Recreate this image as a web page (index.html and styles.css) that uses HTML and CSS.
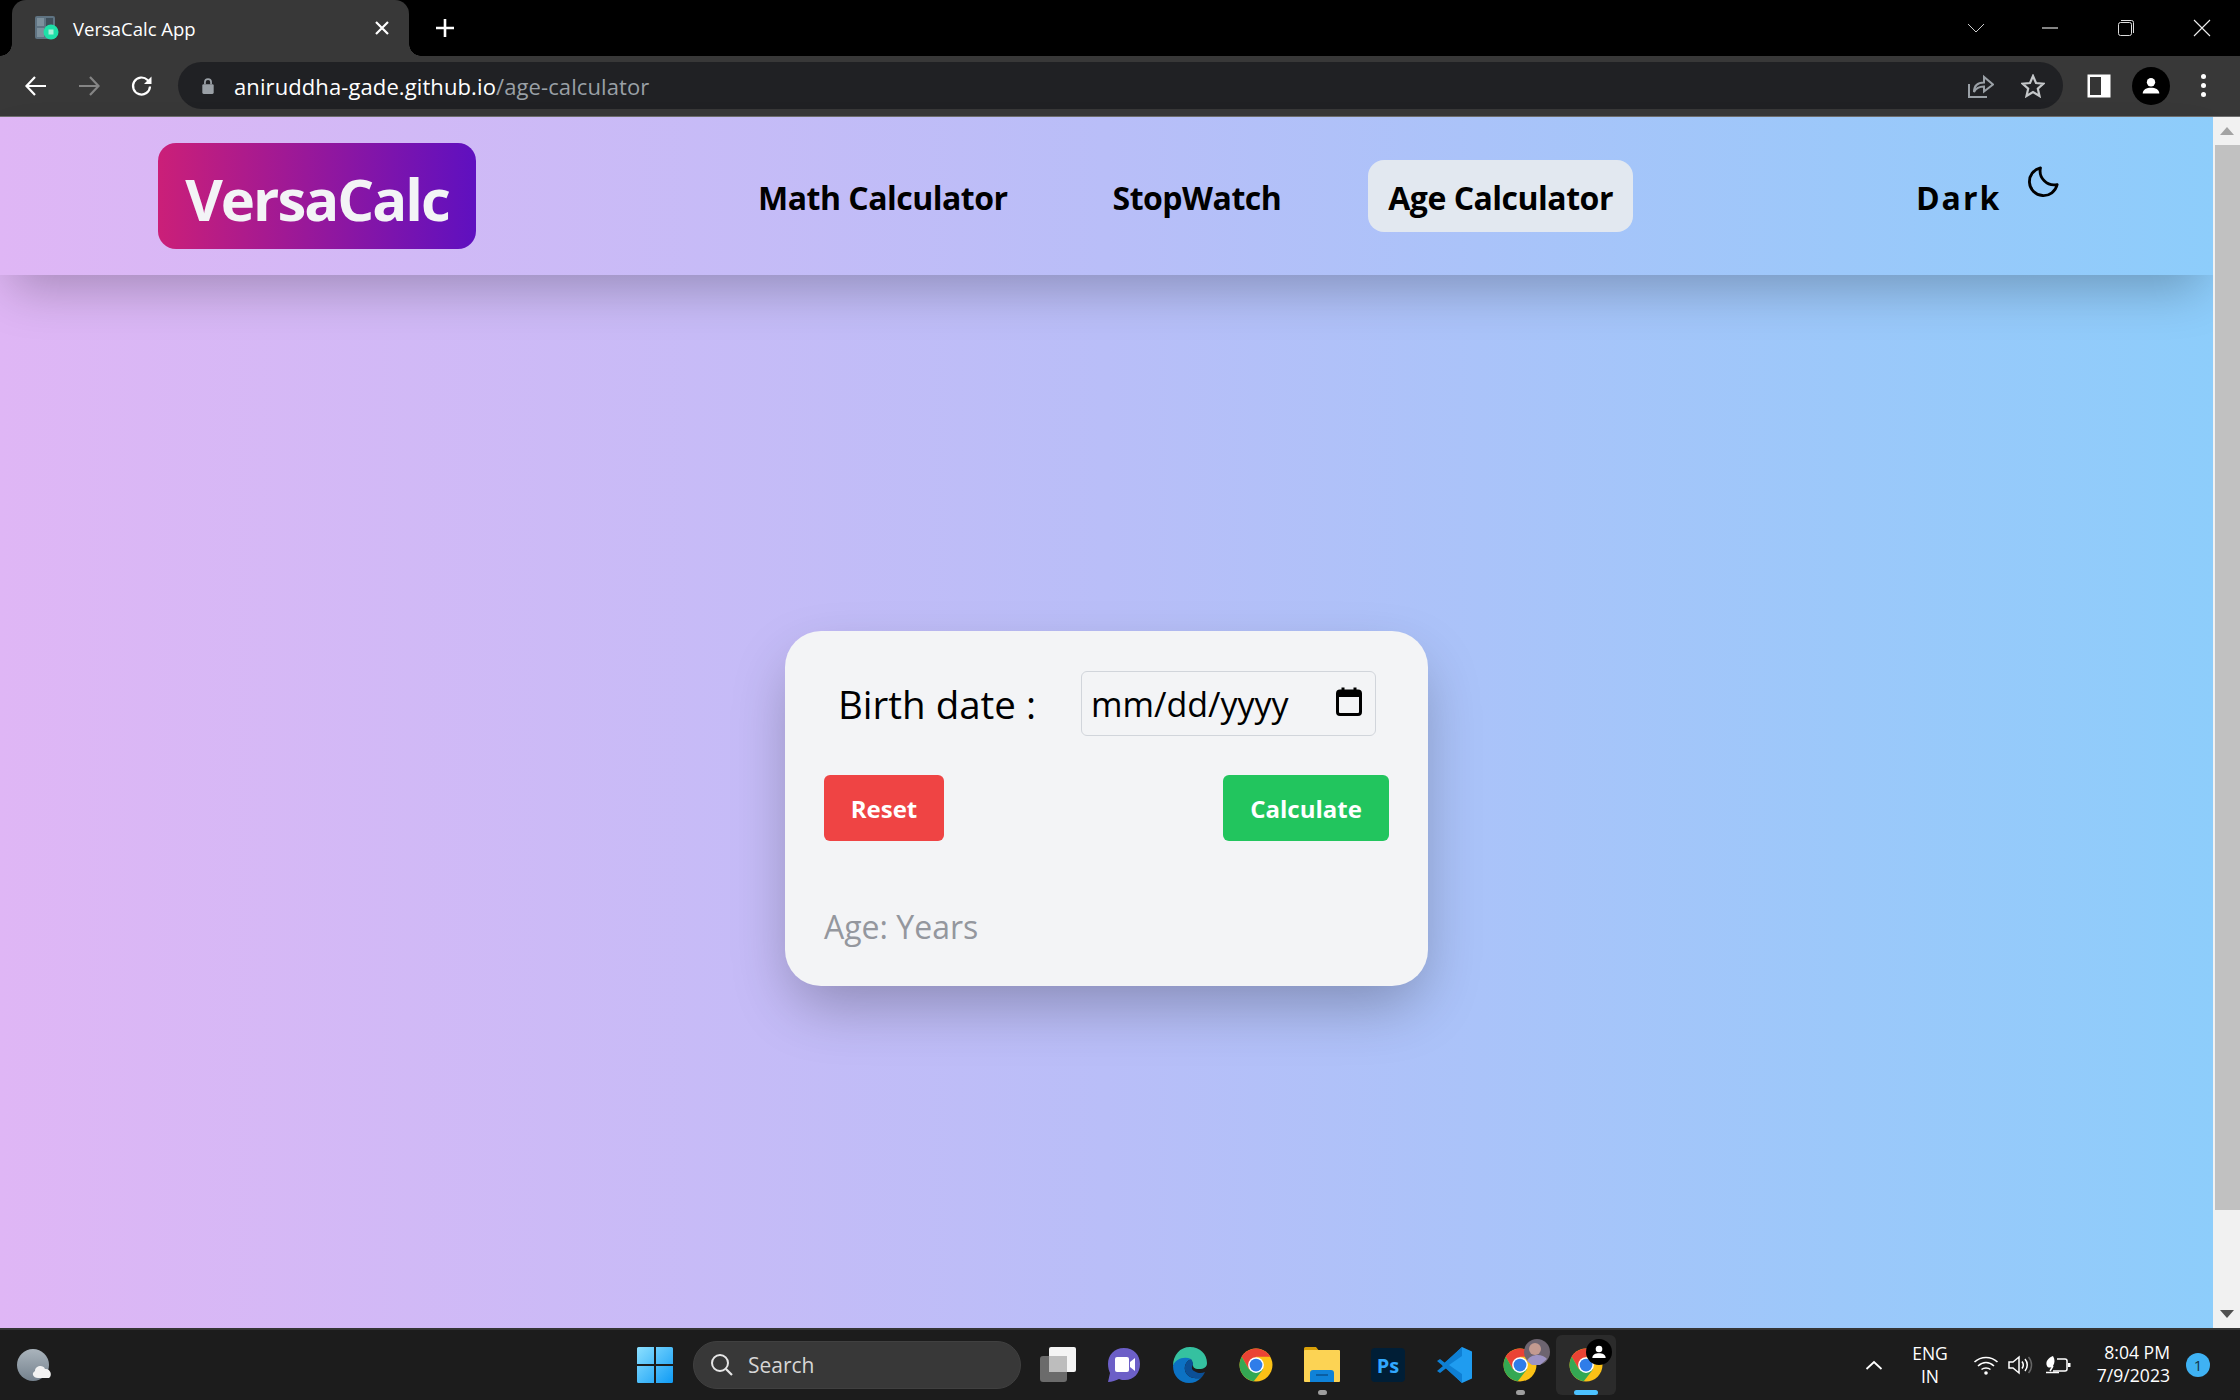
FILE: index.html
```html
<!DOCTYPE html>
<html>
<head>
  <meta charset="utf-8">
  <title>VersaCalc App</title>
  <link rel="stylesheet" href="styles.css">
</head>
<body>
  <svg class="defs" width="0" height="0">
    <symbol id="chrome" viewBox="0 0 48 48">
      <circle cx="24" cy="24" r="22" fill="#fbc116"/>
      <path d="M5 13A22 22 0 0 1 43 13H24L14.5 29.5Z" fill="#ea4335"/>
      <path d="M5 13A22 22 0 0 0 21 45.8L33.5 29.5H14.5Z" fill="#34a853"/>
      <circle cx="24" cy="24" r="10.5" fill="#fff"/>
      <circle cx="24" cy="24" r="8.5" fill="#2f7de9"/>
    </symbol>
  </svg>

  <!-- browser tabs -->
  <div class="tabstrip">
    <div class="tab">
      <svg class="favicon" viewBox="0 0 24 24">
        <rect x="0" y="0" width="20" height="23" rx="2" fill="#5f7382"/>
        <rect x="2" y="2" width="7" height="8" fill="#7d909c"/>
        <rect x="11" y="2" width="7" height="8" fill="#3f4f5a"/>
        <rect x="2" y="12" width="7" height="9" fill="#7d909c"/>
        <circle cx="16" cy="16" r="7.5" fill="#1fe0a8"/>
        <rect x="13.5" y="13.5" width="5" height="5" fill="#a8f0d8"/>
      </svg>
      <span class="tab-title">VersaCalc App</span>
      <svg class="tab-close" viewBox="0 0 14 14"><path d="M1 1L13 13M13 1L1 13" stroke="#fff" stroke-width="2.2"/></svg>
    </div>
    <svg class="new-tab" viewBox="0 0 20 20"><path d="M10 1V19M1 10H19" stroke="#fff" stroke-width="2.6"/></svg>
    <div class="win-controls">
      <svg class="win-btn" viewBox="0 0 20 20"><path d="M2 6L10 14L18 6" fill="none" stroke="#ccc"/></svg>
      <svg class="win-btn" viewBox="0 0 20 20"><path d="M2 10H18" stroke="#ddd" stroke-width="1.2"/></svg>
      <svg class="win-btn" viewBox="0 0 20 20"><rect x="2.5" y="4.5" width="13" height="13" rx="2" fill="none" stroke="#ddd"/><path d="M5 2.5H15.5A2 2 0 0 1 17.5 4.5V15" fill="none" stroke="#ddd"/></svg>
      <svg class="win-btn" viewBox="0 0 20 20"><path d="M2 2L18 18M18 2L2 18" stroke="#eee" stroke-width="1.1"/></svg>
    </div>
  </div>

  <!-- address bar -->
  <div class="toolbar">
    <svg class="tool-icon" viewBox="0 0 24 24"><path d="M22 12H3M11 3L2.5 12L11 21" fill="none" stroke="#fff" stroke-width="2.2"/></svg>
    <svg class="tool-icon" viewBox="0 0 24 24"><path d="M2 12H21M13 3L21.5 12L13 21" fill="none" stroke="#858585" stroke-width="2.2"/></svg>
    <svg class="tool-icon" viewBox="0 0 24 24"><path d="M20 12.5A8.5 8.5 0 1 1 17.5 6L20.5 8.5" fill="none" stroke="#fff" stroke-width="2.2"/><path d="M21.5 2.5V10H14Z" fill="#fff"/></svg>
    <div class="omnibox">
      <svg class="lock" viewBox="0 0 16 20"><path d="M4.5 8V5.5A3.5 3.5 0 0 1 11.500 5.500V8" fill="none" stroke="#9aa0a6" stroke-width="2"/><rect x="1.500" y="8" width="13" height="11" rx="1.500" fill="#9aa0a6"/></svg>
      <span class="url">aniruddha-gade.github.io<span class="url-path">/age-calculator</span></span>
      <svg class="omni-share" viewBox="0 0 26 24"><path d="M1 10V23H19" fill="none" stroke="#9aa0a6" stroke-width="2"/><path d="M6 18C6 11 10 8.500 16 8.500V3L25 10.500L16 17.500V12.500C11 12.500 8 14 6 18Z" fill="none" stroke="#9aa0a6" stroke-width="2"/></svg>
      <svg class="omni-star" viewBox="0 0 24 24"><path d="M12 2L15 9L22.500 9.700L16.800 14.600L18.500 22L12 18L5.500 22L7.200 14.600L1.500 9.700L9 9Z" fill="none" stroke="#c4c7c9" stroke-width="2.200"/></svg>
    </div>
    <svg class="side-panel" viewBox="0 0 24 24"><rect x="0.500" y="0.500" width="23" height="23" fill="#fff"/><rect x="3" y="3" width="11" height="18" fill="#353535"/></svg>
    <div class="profile">
      <svg viewBox="0 0 24 24"><circle cx="12" cy="7.500" r="5" fill="#fff"/><path d="M2 21C2 16 7 14 12 14S22 16 22 21Z" fill="#fff"/></svg>
    </div>
    <div class="kebab"><i></i><i></i><i></i></div>
  </div>

  <!-- page -->
  <div class="viewport">
    <div class="page">
      <header class="nav">
        <div class="logo">VersaCalc</div>
        <nav class="nav-links">
          <a class="nav-link">Math Calculator</a>
          <a class="nav-link">StopWatch</a>
          <a class="nav-link active">Age Calculator</a>
        </nav>
        <div class="theme">
          <span class="theme-label">Dark</span>
          <svg class="moon" viewBox="0 0 24 24"><path d="M21.300 14.500A9.900 9.900 0 0 1 9.500 2.700A9.900 9.900 0 1 0 21.300 14.500Z" fill="none" stroke="#000" stroke-width="2" stroke-linejoin="round"/></svg>
        </div>
      </header>

      <main class="card">
        <div class="birth-row">
          <label class="birth-label">Birth date :</label>
          <div class="date-input">
            <span>mm/dd/yyyy</span>
            <svg class="calendar" viewBox="0 0 26 29"><path d="M7 0.500V5M19 0.500V5" stroke="#000" stroke-width="3"/><rect x="1.500" y="4" width="23" height="23.500" rx="2.500" fill="none" stroke="#000" stroke-width="3"/><rect x="1.500" y="4" width="23" height="6" fill="#000"/></svg>
          </div>
        </div>
        <div class="btn-row">
          <button class="btn btn-reset">Reset</button>
          <button class="btn btn-calc">Calculate</button>
        </div>
        <p class="result">Age: Years</p>
      </main>
    </div>

    <div class="scrollbar">
      <div class="scroll-btn"><i class="arrow-up"></i></div>
      <div class="scroll-thumb"></div>
      <div class="scroll-track"></div>
      <div class="scroll-btn"><i class="arrow-down"></i></div>
    </div>
  </div>

  <!-- windows taskbar -->
  <footer class="taskbar">
    <svg class="weather" viewBox="0 0 36 34">
      <defs>
        <linearGradient id="moonlit" x1="0" y1="0" x2="0" y2="1"><stop offset="0" stop-color="#aab4bc"/><stop offset="1" stop-color="#75828e"/></linearGradient>
      </defs>
      <circle cx="16" cy="17" r="16" fill="url(#moonlit)"/>
      <path d="M21 30C16 30 14 25 18 23C18 18 26 16 28 21C33 20 36 27 32 30Z" fill="#f2f2f2"/>
    </svg>

    <svg class="start" viewBox="0 0 36 36">
      <defs>
        <linearGradient id="win" x1="0" y1="0" x2="1" y2="1"><stop offset="0" stop-color="#8ce0ff"/><stop offset="1" stop-color="#0f9bf5"/></linearGradient>
      </defs>
      <path d="M0 1.500A1.500 1.500 0 0 1 1.500 0H17V17H0ZM19 0H34.500A1.500 1.500 0 0 1 36 1.500V17H19ZM0 19H17V36H1.500A1.500 1.500 0 0 1 0 34.500ZM19 19H36V34.500A1.500 1.500 0 0 1 34.500 36H19Z" fill="url(#win)"/>
    </svg>

    <div class="search">
      <svg viewBox="0 0 24 24"><circle cx="10" cy="10" r="8" fill="none" stroke="#e6e6e6" stroke-width="2"/><path d="M16 16L22 22" stroke="#e6e6e6" stroke-width="2.200"/></svg>
      <span>Search</span>
    </div>

    <div class="apps">
      <div class="app">
        <svg viewBox="0 0 36 36"><rect x="0" y="9" width="27" height="26" rx="3" fill="#6b6b6b"/><rect x="9" y="0" width="27" height="25" rx="2" fill="#f4f4f4"/><rect x="9" y="9" width="18" height="16" fill="#bdbdbd"/></svg>
      </div>
      <div class="app">
        <svg viewBox="0 0 36 36">
          <path d="M18 1C8 1 2 8 2 17C2 21 3 24 4 26L2 35C6 35 10 33 13 32C15 33 17 33 19 33C28 33 34 26 34 17C34 8 28 1 18 1Z" fill="#6c5fc7"/>
          <rect x="9" y="10" width="14" height="15" rx="2" fill="#fff"/><path d="M24 15L29 11V24L24 20Z" fill="#fff"/>
        </svg>
      </div>
      <div class="app">
        <svg viewBox="0 0 36 36">
          <path d="M1 19C1 8 8 0 18 0C28 0 35 7 35 16C35 20 32 22 27 22C22 22 21 20 21 18C21 14 17 11 12 12C6 13 2 17 1 19Z" fill="#35c1a0"/>
          <path d="M1 19C1 29 8 36 17 36C22 36 26 34 29 31C24 32 17 31 14 26C11 20 14 14 19 12C12 9 3 12 1 19Z" fill="#0c72c4"/>
          <path d="M14 26C17 31 24 32 29 31C31 29 32 27 33 25C29 27 25 26 22 24C20 23 19 20 21 18C21 15 20 13 19 12C14 14 11 20 14 26Z" fill="#0b4f96"/>
        </svg>
      </div>
      <div class="app"><svg viewBox="0 0 48 48"><use href="#chrome"/></svg></div>
      <div class="app">
        <svg viewBox="0 0 36 36">
          <path d="M0 1.500A1.500 1.500 0 0 1 1.500 0H12L16 5H36V12H0Z" fill="#d9a008"/>
          <rect x="0" y="3" width="36" height="32" rx="1" fill="#fcd354"/>
          <path d="M6 35V26A3 3 0 0 1 9 23H27A3 3 0 0 1 30 26V35Z" fill="#0f82d8"/>
          <rect x="12" y="27" width="12" height="2" fill="#0a5ea3"/>
        </svg>
        <i class="app-dot"></i>
      </div>
      <div class="app">
        <div class="ps">Ps</div>
      </div>
      <div class="app">
        <svg viewBox="0 0 36 36">
          <path d="M26 0L36 4.500V31.500L26 36L7 18Z" fill="#1f9cf0"/>
          <path d="M26 0L6 18L26 36V27L13 18L26 9Z" fill="#0e7fd4"/>
          <path d="M1 14L4 12L13 19L4 26L1 24L7 19Z" fill="#0e7fd4"/>
        </svg>
      </div>
      <div class="app">
        <svg viewBox="0 0 48 48"><use href="#chrome"/></svg>
        <svg class="app-badge" viewBox="0 0 26 26"><circle cx="13" cy="13" r="13" fill="#6d6470"/><circle cx="11" cy="10" r="6" fill="#c39a90"/><path d="M3 22C6 15 18 14 23 20L16 26H8Z" fill="#9d93c4"/></svg>
        <i class="app-dot"></i>
      </div>
      <div class="app current">
        <svg viewBox="0 0 48 48"><use href="#chrome"/></svg>
        <div class="app-badge profile-badge"><svg viewBox="0 0 24 24"><circle cx="12" cy="7.500" r="5" fill="#fff"/><path d="M2 21C2 16 7 14 12 14S22 16 22 21Z" fill="#fff"/></svg></div>
        <i class="app-bar"></i>
      </div>
    </div>

    <div class="tray">
      <svg class="tray-chevron" viewBox="0 0 18 10"><path d="M1.500 9L9 2L16.500 9" fill="none" stroke="#fff" stroke-width="1.800"/></svg>
      <div class="lang">ENG<br>IN</div>
      <svg class="tray-wifi" viewBox="0 0 26 20"><path d="M1.500 7C8 1 18 1 24.500 7M5 11C10 6.500 16 6.500 21 11M8.500 14.500C11 12.500 15 12.500 17.500 14.500" fill="none" stroke="#fff" stroke-width="1.600"/><circle cx="13" cy="18" r="1.800" fill="#fff"/></svg>
      <svg class="tray-vol" viewBox="0 0 26 20"><path d="M1 7H5L11 2V18L5 13H1Z" fill="none" stroke="#fff" stroke-width="1.500"/><path d="M14 6.500C15.500 8.500 15.500 11.500 14 13.500M17 4C20 7.500 20 12.500 17 16" fill="none" stroke="#fff" stroke-width="1.500"/><path d="M20.500 2C24.500 6.500 24.500 13.500 20.500 18" fill="none" stroke="#666" stroke-width="1.500"/></svg>
      <svg class="tray-battery" viewBox="0 0 26 20"><path d="M12 4H20A2 2 0 0 1 22 6V14A2 2 0 0 1 20 16H8" fill="none" stroke="#fff" stroke-width="1.500"/><rect x="23" y="8" width="2.500" height="4" fill="#fff"/><path d="M8 1C3 3 0 7 2 11C3 13 6 13 8 11C10 8 10 4 8 1Z" fill="#fff"/><path d="M1 17.500H14M8 11L5 16" stroke="#fff" stroke-width="1.500" fill="none"/></svg>
      <div class="clock">8:04 PM<br>7/9/2023</div>
      <div class="notif">1</div>
    </div>
  </footer>
</body>
</html>
```

FILE: styles.css
```css
* {
  box-sizing: border-box;
}
html, body {
  margin: 0;
  height: 1400px;
  overflow: hidden;
}
body {
  display: flex;
  flex-direction: column;
  font-family: "Open Sans", "Noto Sans", sans-serif;
  background: #000;
}
.defs {
  position: absolute;
}

/* browser tabs */
.tabstrip {
  height: 56px;
  flex: none;
  display: flex;
  align-items: center;
  padding-left: 12px;
  background: #000;
}
.tab {
  position: relative;
  width: 397px;
  height: 56px;
  display: flex;
  align-items: center;
  padding-left: 23px;
  background: #383838;
  border-radius: 14px 14px 0 0;
}
.tab::before, .tab::after {
  content: "";
  position: absolute;
  bottom: 0;
  width: 12px;
  height: 12px;
}
.tab::before {
  left: -12px;
  background: radial-gradient(circle at 0 0, #000 11.5px, #383838 12px);
}
.tab::after {
  right: -12px;
  background: radial-gradient(circle at 100% 0, #000 11.5px, #383838 12px);
}
.favicon {
  width: 24px;
  height: 24px;
  margin-right: 14px;
}
.tab-title {
  color: #fff;
  font-size: 18.5px;
  flex: 1;
}
.tab-close {
  width: 14px;
  height: 14px;
  margin-right: 20px;
}
.new-tab {
  width: 20px;
  height: 20px;
  margin-left: 26px;
}
.win-controls {
  margin-left: auto;
  display: flex;
}
.win-btn {
  width: 20px;
  height: 20px;
  margin-right: 56px;
}
.win-btn:first-child {
  margin-right: 54px;
}
.win-btn:last-child {
  margin-right: 28px;
}

/* address bar */
.toolbar {
  height: 61px;
  flex: none;
  display: flex;
  align-items: center;
  padding: 0 0 1px 24px;
  background: #383838;
  border-bottom: 1px solid #6e6e6e;
}
.tool-icon {
  width: 24px;
  height: 24px;
  margin-right: 29px;
}
.tool-icon:nth-child(3) {
  margin-right: 24px;
}
.omnibox {
  width: 1885px;
  height: 47px;
  display: flex;
  align-items: center;
  padding-left: 23px;
  background: #202124;
  border-radius: 24px;
}
.lock {
  width: 14px;
  height: 18px;
  margin-right: 19px;
}
.url {
  color: #fff;
  font-size: 22px;
  letter-spacing: 0.1px;
  flex: 1;
}
.url-path {
  color: #9aa0a6;
}
.omni-share {
  width: 26px;
  height: 24px;
  margin-right: 27px;
}
.omni-star {
  width: 24px;
  height: 24px;
  margin-right: 18px;
}
.side-panel {
  width: 24px;
  height: 24px;
  margin-left: 24px;
}
.profile {
  width: 38px;
  height: 38px;
  margin-left: 21px;
  padding: 9px;
  border-radius: 50%;
  background: #000;
}
.profile svg {
  display: block;
}
.kebab {
  margin-left: 31px;
  display: flex;
  flex-direction: column;
  gap: 4px;
}
.kebab i {
  width: 5px;
  height: 5px;
  background: #fff;
  border-radius: 50%;
}

/* page */
.viewport {
  height: 1211px;
  flex: none;
  display: flex;
}
.page {
  flex: 1;
  background: linear-gradient(to right, #dfb6f5, #b9bef8 50%, #8dcdfb);
}
.nav {
  height: 158px;
  display: flex;
  align-items: center;
  padding-left: 158px;
  background: linear-gradient(to right, #dfb6f5, #b9bef8 50%, #8dcdfb);
  box-shadow: 0 25px 50px -12px rgba(0, 0, 0, 0.25);
}
.logo {
  width: 318px;
  height: 106px;
  padding-top: 4px;
  display: flex;
  align-items: center;
  justify-content: center;
  color: #f3f4f6;
  font-size: 58px;
  font-weight: 700;
  letter-spacing: -2px;
  background: linear-gradient(to right, #cb1f78, #5f10c0);
  border-radius: 18px;
}
.nav-links {
  display: flex;
  align-items: center;
  margin-left: 282px;
}
.nav-link {
  padding-top: 2px;
  color: #000;
  font-size: 32px;
  font-weight: 700;
  letter-spacing: -0.5px;
  margin-right: 87px;
}
.nav-link:first-child {
  margin-right: 105px;
}
.nav-link.active {
  margin-right: 0;
  height: 72px;
  padding: 2px 20px 0;
  display: flex;
  align-items: center;
  background: #e2e8f0;
  border-radius: 16px;
}
.theme {
  display: flex;
  align-items: flex-start;
  margin-left: 283px;
}
.theme-label {
  padding-top: 2px;
  color: #000;
  font-size: 32px;
  font-weight: 700;
  letter-spacing: 2px;
}
.moon {
  width: 34px;
  height: 34px;
  margin-left: 26px;
  margin-top: -10px;
}

.card {
  width: 643px;
  height: 355px;
  margin: 356px auto 0;
  padding: 40px 39px 0;
  background: #f3f4f6;
  border-radius: 36px;
  box-shadow: 0 25px 60px -8px rgba(0, 0, 0, 0.28);
}
.birth-row {
  display: flex;
  align-items: center;
  padding-left: 14px;
}
.birth-label {
  width: 243px;
  color: #000;
  font-size: 38.5px;
}
.date-input {
  width: 295px;
  height: 65px;
  display: flex;
  align-items: center;
  justify-content: space-between;
  padding: 0 13px 0 9px;
  border: 1px solid #d1d5db;
  border-radius: 6px;
  color: #000;
  font-size: 34px;
}
.calendar {
  width: 26px;
  height: 29px;
  margin-top: -4px;
}
.btn-row {
  display: flex;
  justify-content: space-between;
  margin-top: 39px;
}
.btn {
  height: 66px;
  border: none;
  border-radius: 6px;
  color: #fff;
  font-family: inherit;
  font-size: 24px;
  font-weight: 700;
}
.btn-reset {
  width: 120px;
  background: #ef4444;
}
.btn-calc {
  width: 166px;
  background: #22c55e;
}
.result {
  margin: 64px 0 0;
  color: #94979e;
  font-size: 32px;
}

/* scrollbar */
.scrollbar {
  width: 27px;
  flex: none;
  display: flex;
  flex-direction: column;
  background: #f1f1f1;
}
.scroll-btn {
  height: 28px;
  display: flex;
  align-items: center;
  justify-content: center;
  flex: none;
}
.scroll-thumb {
  height: 1065px;
  flex: none;
  margin-left: 2px;
  background: #c1c1c1;
}
.scroll-track {
  flex: 1;
}
.arrow-up, .arrow-down {
  width: 0;
  height: 0;
  border-left: 7px solid transparent;
  border-right: 7px solid transparent;
}
.arrow-up {
  border-bottom: 8px solid #a3a3a3;
}
.arrow-down {
  border-top: 8px solid #505050;
}

/* windows taskbar */
.taskbar {
  height: 72px;
  flex: none;
  display: flex;
  align-items: center;
  padding-left: 17px;
  background: #1c1c1c;
  border-top: 2px solid #343434;
}
.weather {
  width: 36px;
  height: 34px;
}
.start {
  width: 36px;
  height: 36px;
  margin-left: 584px;
}
.search {
  width: 328px;
  height: 48px;
  margin-left: 20px;
  display: flex;
  align-items: center;
  padding-left: 16px;
  background: #383838;
  border: 1px solid #404040;
  border-radius: 24px;
  color: #d6d6d6;
  font-size: 21px;
}
.search svg {
  width: 24px;
  height: 24px;
  margin-right: 14px;
}
.apps {
  display: flex;
  margin-left: 4px;
}
.app {
  position: relative;
  width: 66px;
  height: 60px;
  display: flex;
  align-items: center;
  justify-content: center;
}
.app > svg:first-child {
  width: 36px;
  height: 36px;
}
.app-dot {
  position: absolute;
  left: 29px;
  bottom: 0;
  width: 9px;
  height: 5px;
  background: #9e9e9e;
  border-radius: 3px;
}
.app-bar {
  position: absolute;
  left: 18px;
  bottom: 0;
  width: 24px;
  height: 5px;
  background: #4cc2ff;
  border-radius: 3px;
}
.app.current {
  background: #2b2b2b;
  border-radius: 6px;
  width: 60px;
  margin-left: 3px;
}
.app-badge {
  position: absolute;
  left: 37px;
  top: 4px;
  width: 26px;
  height: 26px;
}
.profile-badge {
  left: 30px;
  padding: 5px;
  background: #000;
  border-radius: 50%;
}
.profile-badge svg {
  display: block;
}
.ps {
  width: 34px;
  height: 34px;
  display: flex;
  align-items: center;
  justify-content: center;
  color: #31a8ff;
  font-size: 20px;
  font-weight: 700;
  background: #001e36;
  border-radius: 4px;
}

.tray {
  display: flex;
  align-items: center;
  margin-left: 249px;
  color: #fff;
}
.tray-chevron {
  width: 18px;
  height: 10px;
}
.lang {
  width: 50px;
  margin-left: 22px;
  text-align: center;
  font-size: 17.5px;
  line-height: 23px;
}
.tray-wifi {
  width: 26px;
  height: 20px;
  margin-left: 18px;
}
.tray-vol {
  width: 26px;
  height: 20px;
  margin-left: 9px;
}
.tray-battery {
  width: 26px;
  height: 20px;
  margin-left: 11px;
}
.clock {
  width: 100px;
  margin-left: -1px;
  padding-bottom: 2px;
  text-align: right;
  font-size: 17.6px;
  line-height: 23px;
}
.notif {
  width: 24px;
  height: 24px;
  margin-left: 16px;
  display: flex;
  align-items: center;
  justify-content: center;
  color: #12344a;
  font-size: 15px;
  background: #3fb2f3;
  border-radius: 50%;
}
```
